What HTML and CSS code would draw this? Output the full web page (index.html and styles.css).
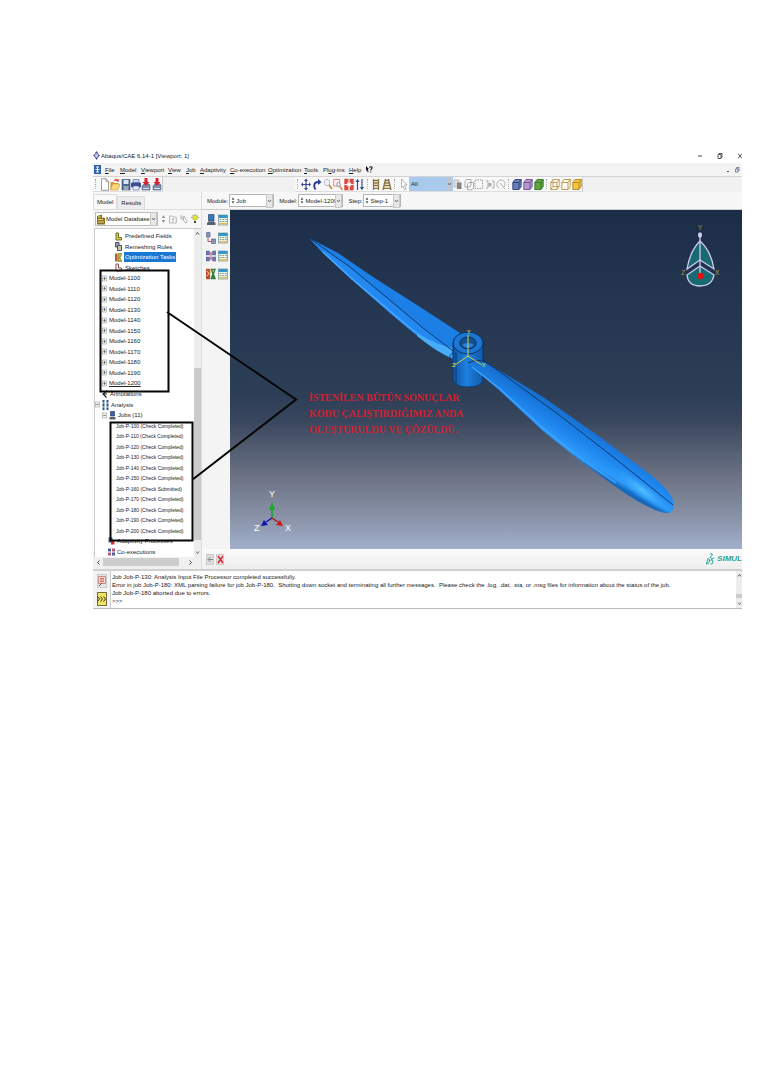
FILE: index.html
```html
<!DOCTYPE html>
<html lang="tr">
<head>
<meta charset="utf-8">
<title>Abaqus/CAE 6.14-1 [Viewport: 1]</title>
<link rel="stylesheet" href="styles.css">
</head>
<body>
<svg class="defs" aria-hidden="true">
  <symbol id="plus" viewBox="0 0 5 7"><rect x=".5" y="1" width="4" height="5" fill="#f4f4f4" stroke="#aaa" stroke-width=".7"/><path d="M1.3 3.5h2.4M2.5 2v3" stroke="#555" stroke-width=".7"/></symbol>
  <symbol id="minus" viewBox="0 0 5 7"><rect x=".5" y="1" width="4" height="5" fill="#f4f4f4" stroke="#aaa" stroke-width=".7"/><path d="M1.3 3.5h2.4" stroke="#555" stroke-width=".7"/></symbol>
  <symbol id="down" viewBox="0 0 5 5"><path d="M1 1.5l1.5 2 1.5-2" fill="none" stroke="#555" stroke-width=".8"/></symbol>
  <symbol id="up" viewBox="0 0 5 5"><path d="M1 3.5l1.5-2 1.5 2" fill="none" stroke="#555" stroke-width="1"/></symbol>
  <symbol id="spin" viewBox="0 0 5 10"><path d="M.8 4l1.7-3 1.7 3zM.8 6l1.7 3 1.7-3z" fill="#555"/></symbol>
  <symbol id="table" viewBox="0 0 10 12"><rect x=".5" y="1" width="9" height="10" fill="#eef3ee" stroke="#6d8d98" stroke-width=".7"/><path d="M.5 1h9v3h-9z" fill="#3596c8"/><path d="M1.5 5.5h2M4.2 5.5h2M7 5.5h1.8M1.5 7.5h2M4.2 7.5h2M7 7.5h1.8" stroke="#8aa883"/><path d="M.8 9.7h8.4" stroke="#d9bb62" stroke-width="1.5"/></symbol>
  <symbol id="cube" viewBox="0 0 10 13"><path d="M.8 4.5L3 1.500h6.200v7L7 11.500H.8zM.8 4.500H7v7M7 4.500l2.200-3" stroke-width=".9" stroke-linejoin="round"/></symbol>
  <symbol id="import" viewBox="0 0 10 13"><path d="M2 7l1-1h5l1 1v5H1V8z" fill="#7e8fae" stroke="#46587b" stroke-width=".6"/><path d="M2 10.500h6" stroke="#dde4ef"/><path d="M3.500 0h3v4h2L5 8 1.500 4h2z" fill="#d3202c"/></symbol>
</svg>
<main class="page">
<section class="app">
  <header class="titlebar">
    <svg width="7" height="9" viewBox="0 0 7 9"><path d="M3.500 0L5 2.200H2zM3.500 9L5 6.800H2zM0 4.500L2 3v3zM7 4.500L5 3v3z" fill="#4a4b8e"/><ellipse cx="3.500" cy="4.500" rx="2" ry="2.400" fill="#c6c7e2" stroke="#4a4b8e" stroke-width=".7"/></svg>
    <h1>Abaqus/CAE 6.14-1 [Viewport: 1]</h1>
    <div class="winbtns">
      <button aria-label="Minimize"><svg width="6" height="8" viewBox="0 0 6 8"><path d="M1 4h4" stroke="#333" stroke-width=".9"/></svg></button>
      <button aria-label="Restore"><svg width="6" height="8" viewBox="0 0 6 8"><path d="M1 2.500h3v4H1zM2 2.500v-1h3v4H4" fill="none" stroke="#333" stroke-width=".8"/></svg></button>
      <button aria-label="Close"><svg width="6" height="8" viewBox="0 0 6 8"><path d="M1 1.500l4 5M5 1.500l-4 5" stroke="#333" stroke-width=".8"/></svg></button>
    </div>
  </header>
  <nav class="menubar">
    <svg width="7" height="9" viewBox="0 0 7 9"><rect width="7" height="9" fill="#2f62a9"/><path d="M2 2h3M3.500 2v5M2 7h3M1.500 4.500h4" stroke="#fff" stroke-width=".9"/></svg>
    <button class="m-file"><u>F</u>ile</button><button class="m-model"><u>M</u>odel</button><button class="m-view"><u>V</u>iewport</button><button class="m-v"><u>V</u>iew</button><button class="m-job"><u>J</u>ob</button><button class="m-ad"><u>A</u>daptivity</button><button class="m-co"><u>C</u>o-execution</button><button class="m-opt"><u>O</u>ptimization</button><button class="m-tools"><u>T</u>ools</button><button class="m-plug">Pl<u>u</u>g-ins</button><button class="m-help"><u>H</u>elp</button>
    <svg width="7" height="8" viewBox="0 0 7 8"><path d="M0 0l3 3-1.200.2L2.600 6 1.600 6.300 1 4 0 5z" fill="#111"/><path d="M3.500 1.600C4 .3 6.300.5 6 2c-.1 1-1.200 1-1.200 2.400M4.800 5.500v1" fill="none" stroke="#111" stroke-width="1.100"/></svg>
    <svg class="mdi" width="14" height="7" viewBox="0 0 14 7"><path d="M1 5.500h2" stroke="#555"/><path d="M9.500 3h2.500v3H9.500zM10.500 3V1.500H13V4.500h-1" fill="none" stroke="#68758b" stroke-width=".9"/></svg>
  </nav>
  <div class="toolbar">
    <div class="group first"><i class="grip"></i>
      <button aria-label="New"><svg viewBox="0 0 10 13"><path d="M1.500 .7h4.500l2.500 3v8.600h-7z" fill="#fff" stroke="#888" stroke-width=".8"/><path d="M6 .7v3h2.500" fill="none" stroke="#888" stroke-width=".7"/></svg></button>
      <button aria-label="Open"><svg viewBox="0 0 10 13"><path d="M.5 4h3l1 1H8v7H.5z" fill="#d89b35"/><path d="M2.500 6H10l-2 6H.6z" fill="#fbd77a" stroke="#c08a30" stroke-width=".5"/><path d="M4 3C5 .5 7 .8 7.500 2.500M8.800 1.500L7.800 4 6.300 2.300z" fill="#d0504a" stroke="#d0504a" stroke-width=".8"/></svg></button>
      <button aria-label="Save"><svg viewBox="0 0 10 13"><rect x="1" y="1.500" width="8" height="10.500" fill="#4a6b96" stroke="#34486c" stroke-width=".6"/><path d="M2.500 2h5v4h-5z" fill="#d8e4ee"/><path d="M2.500 8h5v4h-5z" fill="#9aa9b5"/></svg></button>
      <button aria-label="Print"><svg viewBox="0 0 10 13"><path d="M2 1.500h6V5H2z" fill="#cfd9ee" stroke="#4b5d94" stroke-width=".6"/><rect y="4.500" width="10" height="5" rx="1" fill="#3d4d90"/><path d="M2 8h6v4H2z" fill="#e8ecf6" stroke="#4b5d94" stroke-width=".6"/></svg></button>
      <button aria-label="Import database"><svg><use href="#import"/></svg></button>
      <button aria-label="Import model"><svg><use href="#import"/></svg></button>
    </div>
    <div class="group rest"><i class="grip"></i>
      <button aria-label="Pan"><svg viewBox="0 0 10 13"><path d="M1 6.500h8M5 1.500v10" stroke="#34489e" stroke-width="1.200"/><path d="M5 .5l2 2.500H3zM5 12.500l2-2.500H3zM0 6.500L2 4.300v4.400zM10 6.500L8 4.300v4.400z" fill="#34489e"/></svg></button>
      <button aria-label="Rotate"><svg viewBox="0 0 10 13"><path d="M3.500 11.500C1 8 2 3.800 6.500 4" fill="none" stroke="#2b3a99" stroke-width="1.900"/><path d="M6 1l3.500 3L6 7z" fill="#2b3a99"/></svg></button>
      <button aria-label="Zoom"><svg viewBox="0 0 10 13"><ellipse cx="4" cy="4.500" rx="2.700" ry="3.200" fill="#f2f2f6" stroke="#b6b6bd" stroke-width=".9"/><path d="M6 7l3 4" stroke="#c58948" stroke-width="1.700"/></svg></button>
      <button aria-label="Box zoom"><svg viewBox="0 0 10 13"><path d="M.7 1.500h6v6.500h-6z" fill="#fff5f5" stroke="#d56a68" stroke-width=".8"/><ellipse cx="5.500" cy="6.500" rx="1.800" ry="2.200" fill="#eef" stroke="#999"/><path d="M7 8.500l2.500 3.500" stroke="#c58948" stroke-width="1.400"/></svg></button>
      <button aria-label="Fit view"><svg viewBox="0 0 10 13"><rect x=".3" y=".8" width="9.400" height="11.500" fill="#d94a40"/><path d="M5 1v3M5 9v3M.5 6.500h2.500M7 6.500h2.500" stroke="#fff" stroke-width="1.200"/><path d="M3.200 4.500h3.600v4H3.200z" fill="#fff"/></svg></button>
      <button aria-label="Cycle views"><svg viewBox="0 0 10 13"><path d="M2.500 3v9M7 1v9" stroke="#3c4f9a" stroke-width="1.200"/><path d="M2.500 .8L4.600 4H.4zM7 12.300L9.100 9H4.900z" fill="#3c4f9a"/></svg></button>
      <i class="grip"></i>
      <button aria-label="Parallel view"><svg viewBox="0 0 10 13"><path d="M2.500 1v11M7.500 1v11M2 2.500h6M2 5h6M2 7.500h6M2 10.300h6" stroke="#8a7440" stroke-width="1.300"/></svg></button>
      <button aria-label="Perspective view"><svg viewBox="0 0 10 13"><path d="M3.500 1L1 12M6.500 1L9 12M3.500 2.500h3M3 5h4M2.400 7.500h5.200M2 10.300h6" stroke="#8a7440" stroke-width="1.300"/></svg></button>
      <i class="grip"></i>
      <button aria-label="Select"><svg viewBox="0 0 10 13"><path d="M2.500 1l5.500 6H5.500l1.500 4-1.500.7L4 8l-1.500 1.500z" fill="#fff" stroke="#a3a3a3" stroke-width=".8"/></svg></button>
      <label class="combo pick"><select aria-label="Selection filter"><option>All</option></select><svg class="arr"><use href="#down"/></svg></label>
      <button aria-label="Select inside"><svg viewBox="0 0 10 13"><path d="M1 2h5v7H1z" fill="#ddd" stroke="#bbb"/><path d="M4 4.500h4.500V11H4z" fill="#848484"/></svg></button>
      <button aria-label="Replace selection"><svg viewBox="0 0 10 13"><path d="M1 3.500L2.500 1.500H7V7L5.500 9H1zM3.500 6L5 4.500h4.500V10L8 11.800H3.500z" fill="none" stroke="#999" stroke-width=".8"/></svg></button>
      <button aria-label="Box select"><svg viewBox="0 0 10 13"><path d="M1 2h7.500v8.500H1z" fill="none" stroke="#999" stroke-dasharray="1.500 1"/></svg></button>
      <button aria-label="Pick mode"><svg viewBox="0 0 10 13"><path d="M1 3h2v7H1M7 3h2v7H7" fill="none" stroke="#aaa"/><path d="M3.500 5h3v3.500h-3z" fill="#aaa"/></svg></button>
      <button aria-label="Lasso"><svg viewBox="0 0 10 13"><path d="M3 10C-1 8 1 2 5 2s5 4 3 7M4 5l5 6" fill="none" stroke="#aaa" stroke-width=".9"/></svg></button>
      <i class="grip"></i>
      <button aria-label="Assembly display"><svg class="c1"><use href="#cube"/></svg></button>
      <button aria-label="Part display"><svg class="c2"><use href="#cube"/></svg></button>
      <button aria-label="Mesh display"><svg class="c3"><use href="#cube"/></svg></button>
      <i class="grip"></i>
      <button aria-label="Wireframe"><svg viewBox="0 0 10 13"><path d="M.8 4.500L3 1.500h6.200v7L7 11.500H.8zM.8 4.500H7v7M7 4.500l2.200-3M3 1.500v7h6M3 8.500l-2.200 3" fill="none" stroke="#b6923e" stroke-width=".8"/></svg></button>
      <button aria-label="Hidden"><svg class="c4"><use href="#cube"/></svg></button>
      <button aria-label="Shaded"><svg class="c5"><use href="#cube"/></svg></button>
    </div>
  </div>
  <div class="work">
    <aside class="side">
      <div class="tabs" role="tablist"><button role="tab" class="on" aria-selected="true">Model</button><button role="tab" aria-selected="false">Results</button></div>
      <div class="dbrow">
        <label class="combo db"><svg width="8" height="11" viewBox="0 0 8 11"><path d="M0 2l5-1.500v3L8 4v6.500H0z" fill="#8b7023"/><path d="M1 3h3M1 5.500h5M1 8h6" stroke="#ead37c" stroke-width="1.200"/></svg><select aria-label="Database"><option>Model Database</option></select><svg class="arr"><use href="#down"/></svg></label>
        <svg width="5" height="10" class="dim"><use href="#spin"/></svg>
        <svg width="8" height="10" viewBox="0 0 8 10"><path d="M.5 2h3l.8 1h3v6H.5zM4 8V4.500M2.800 6L4 4.500 5.200 6" fill="none" stroke="#aaa" stroke-width=".8"/></svg>
        <svg width="8" height="10" viewBox="0 0 8 10"><path d="M1 1v4h3M1 3l3 0M4 2l3 5-1 2-3-3z" fill="none" stroke="#aaa" stroke-width=".8"/></svg>
        <svg width="8" height="10" viewBox="0 0 8 10"><path d="M4 1.500c3 0 2.800 3 1.200 4.500H2.800C1.200 4.500 1 1.500 4 1.500z" fill="#e3ec35" stroke="#8c9520" stroke-width=".6"/><path d="M3 7h2v2H3z" fill="#444"/><path d="M0 3.500h1M7 3.500h1M4 0v1M1 .8l.7.700M7 .8l-.7.700" stroke="#555" stroke-width=".6"/></svg>
      </div>
      <div class="treebox">
        <ul class="tree">
          <li class="d2"><svg width="7" height="9" viewBox="0 0 7 9"><path d="M1 1v7h5.500V5.500H3.500V1z" fill="#d4ca49" stroke="#68702b"/></svg><span>Predefined Fields</span></li>
          <li class="d2"><svg width="7" height="9" viewBox="0 0 7 9"><path d="M.5 .5H4V5H.5z" fill="#97a3bb" stroke="#46506a"/><path d="M2.500 3.500h4v5h-4z" fill="#c6c9a1" stroke="#46506a"/></svg><span>Remeshing Rules</span></li>
          <li class="d2"><svg width="7" height="9" viewBox="0 0 7 9"><path d="M0 .5h2.500v8H0z" fill="#c15b33"/><path d="M3 .5h4L5 4.500l2 4H3z" fill="#d0a437" stroke="#4a8b3c" stroke-width=".6"/></svg><span class="sel">Optimization Tasks</span></li>
          <li class="d2"><svg width="7" height="9" viewBox="0 0 7 9"><path d="M1 1v7h5.500V5H3.500V1z" fill="#fff" stroke="#8b4b46"/></svg><span>Sketches</span></li>
          <li class="d1"><svg width="5" height="7"><use href="#plus"/></svg><span>Model-1100</span></li>
          <li class="d1"><svg width="5" height="7"><use href="#plus"/></svg><span>Model-1110</span></li>
          <li class="d1"><svg width="5" height="7"><use href="#plus"/></svg><span>Model-1120</span></li>
          <li class="d1"><svg width="5" height="7"><use href="#plus"/></svg><span>Model-1130</span></li>
          <li class="d1"><svg width="5" height="7"><use href="#plus"/></svg><span>Model-1140</span></li>
          <li class="d1"><svg width="5" height="7"><use href="#plus"/></svg><span>Model-1150</span></li>
          <li class="d1"><svg width="5" height="7"><use href="#plus"/></svg><span>Model-1160</span></li>
          <li class="d1"><svg width="5" height="7"><use href="#plus"/></svg><span>Model-1170</span></li>
          <li class="d1"><svg width="5" height="7"><use href="#plus"/></svg><span>Model-1180</span></li>
          <li class="d1"><svg width="5" height="7"><use href="#plus"/></svg><span>Model-1190</span></li>
          <li class="d1"><svg width="5" height="7"><use href="#plus"/></svg><span><u>Model-1200</u></span></li>
          <li class="d1"><svg width="6" height="8" viewBox="0 0 6 8"><path d="M5 .5L1 4l3.500 3.500M1 4h4" fill="none" stroke="#222" stroke-width="1.100"/></svg><span>Annotations</span></li>
          <li class="d0"><svg width="5" height="7"><use href="#minus"/></svg><svg width="7" height="10" viewBox="0 0 7 10"><path d="M1.500 0v10M5.500 0v10" stroke="#2d5687" stroke-width="2"/><path d="M0 3h7M0 7h7" stroke="#fff" stroke-width=".8"/></svg><span>Analysis</span></li>
          <li class="d1"><svg width="5" height="7"><use href="#minus"/></svg><svg width="7" height="9" viewBox="0 0 7 9"><path d="M1.500 .5h4V5h-4z" fill="#3b5faa" stroke="#2a3d70" stroke-width=".7"/><path d="M.5 6h6v2.500h-6z" fill="#5a6472"/></svg><span>Jobs (11)</span></li>
          <li class="d3"><span>Job-P-100 (Check Completed)</span></li>
          <li class="d3"><span>Job-P-110 (Check Completed)</span></li>
          <li class="d3"><span>Job-P-120 (Check Completed)</span></li>
          <li class="d3"><span>Job-P-130 (Check Completed)</span></li>
          <li class="d3"><span>Job-P-140 (Check Completed)</span></li>
          <li class="d3"><span>Job-P-150 (Check Completed)</span></li>
          <li class="d3"><span>Job-P-160 (Check Submitted)</span></li>
          <li class="d3"><span>Job-P-170 (Check Completed)</span></li>
          <li class="d3"><span>Job-P-180 (Check Completed)</span></li>
          <li class="d3"><span>Job-P-190 (Check Completed)</span></li>
          <li class="d3"><span>Job-P-200 (Check Completed)</span></li>
          <li class="d4"><svg width="7" height="8" viewBox="0 0 7 8"><path d="M.5 .5h4v5h-4z" fill="#4d5d94"/><path d="M3 3h3.500v4.500H3z" fill="#c33"/></svg><span>Adaptivity Processes</span></li>
          <li class="d4"><svg width="7" height="8" viewBox="0 0 7 8"><path d="M0 .5h3v3H0zM4 4.500h3v3H4z" fill="#4e5c94"/><path d="M4 .5h3v3H4zM0 4.500h3v3H0z" fill="#b0587a"/></svg><span>Co-executions</span></li>
        </ul>
        <div class="vbar"><svg width="5" height="5"><use href="#up"/></svg><i class="space"></i><i class="thumb"></i><svg width="5" height="5"><use href="#down"/></svg></div>
      </div>
      <div class="hbar"><svg width="5" height="7" viewBox="0 0 5 7"><path d="M3.500 1.500l-2 2 2 2" fill="none" stroke="#444"/></svg><i class="thumb"></i><svg width="5" height="7" viewBox="0 0 5 7"><path d="M1.500 1.500l2 2-2 2" fill="none" stroke="#444"/></svg></div>
    </aside>
    <div class="right">
      <div class="context">
        <label class="combo"><b>Module:</b><span class="box w1"><svg width="4" height="9"><use href="#spin"/></svg><select><option>Job</option></select><svg class="arr"><use href="#down"/></svg></span></label>
        <label class="combo"><b>Model:</b><span class="box w1"><svg width="4" height="9"><use href="#spin"/></svg><select><option>Model-1200</option></select><svg class="arr"><use href="#down"/></svg></span></label>
        <label class="combo"><b>Step:</b><span class="box w2"><svg width="4" height="9"><use href="#spin"/></svg><select><option>Step-1</option></select><svg class="arr"><use href="#down"/></svg></span></label>
      </div>
      <div class="canvasrow">
        <div class="toolbox">
          <button aria-label="Create job"><svg viewBox="0 0 10 12"><path d="M2.500 .5H8V7H2.500z" fill="#3a79b8" stroke="#28466e" stroke-width=".7"/><path d="M1 9l1.500-1.500H8L9.500 9v2H1z" fill="#566170"/></svg></button>
          <button aria-label="Job manager"><svg><use href="#table"/></svg></button>
          <button aria-label="Create adaptivity"><svg viewBox="0 0 10 12"><path d="M.5 .5H4v4.500H.5zM5.500 7H9.500v4.500h-4z" fill="#8497bd" stroke="#4a5a86" stroke-width=".6"/><path d="M2 5.500v4h3" fill="none" stroke="#c2485a"/></svg></button>
          <button aria-label="Adaptivity manager"><svg><use href="#table"/></svg></button>
          <button aria-label="Create co-execution"><svg viewBox="0 0 10 12"><path d="M0 1h3.500v4H0zM0 7h3.500v4H0zM6.500 1H10v4H6.500zM6.500 7H10v4H6.500z" fill="#6f7cb0" stroke="#4c5a98" stroke-width=".5"/><path d="M3.500 3h3M3.500 9h3M5 3v6" stroke="#c64863"/></svg></button>
          <button aria-label="Co-execution manager"><svg><use href="#table"/></svg></button>
          <button aria-label="Create optimization"><svg viewBox="0 0 10 12"><path d="M0 .8h4.200v10.400H0z" fill="#b4522e"/><path d="M1 3l2 2.500L1 8" fill="none" stroke="#f2c04a" stroke-width="1.200"/><path d="M4.500 .8H10L8 6l2 5.200H4.500L6.200 6z" fill="#2f7c38"/><path d="M6 2h2.500L7.300 4z" fill="#e8cf3e"/></svg></button>
          <button aria-label="Optimization manager"><svg><use href="#table"/></svg></button>
        </div>
        <svg class="viewport" viewBox="230 210 512 339" role="img" aria-label="Propeller model">
          <defs>
            <linearGradient id="sky" x2="0" y2="1"><stop offset="0" stop-color="#1c2d49"/><stop offset=".55" stop-color="#2d3f57"/><stop offset=".62" stop-color="#38465d"/><stop offset=".78" stop-color="#6a7183"/><stop offset=".9" stop-color="#8790a5"/><stop offset="1" stop-color="#a1b0cc"/></linearGradient>
            <linearGradient id="hub"><stop offset="0" stop-color="#1256a4"/><stop offset=".45" stop-color="#1d7fe0"/><stop offset="1" stop-color="#1259a8"/></linearGradient>
            <linearGradient id="blade" gradientUnits="userSpaceOnUse" x1="596" y1="432" x2="578" y2="462"><stop offset="0" stop-color="#1670d2"/><stop offset=".45" stop-color="#1e86ee"/><stop offset=".85" stop-color="#2d9bfb"/><stop offset="1" stop-color="#1568bd"/></linearGradient>
            <radialGradient id="shine"><stop offset="0" stop-color="#54c3ff"/><stop offset="1" stop-color="#2d9bfb" stop-opacity="0"/></radialGradient>
          </defs>
          <path fill="url(#sky)" d="M230 210h512v339H230z"/>
          <path d="M309 238L338 253 373 277 417 305 460 333 454 359 449 357Q428 346 390 313L350 278 323 253z" fill="#1b7fe6"/>
          <path d="M309 238L323 253 350 278 390 313Q428 346 449 357L453 359V350L423 328 391 302 350 268z" fill="#2388ef"/>
          <path d="M323 252L350 277 390 311Q427 343 449 356" fill="none" stroke="#48a9ff" stroke-width="1.500"/>
          <path d="M417 333Q437 345 452 348V358Q438 353 417 336z" fill="#48adf8"/>
          <path d="M309 238L350 267 391 301 423 328 453 351" fill="none" stroke="#0b315f" stroke-width=".9"/>
          <path d="M453 343V380Q454 387 468 387T483 380V343z" fill="url(#hub)" stroke="#0a315f" stroke-width=".8"/>
          <path d="M456 352V384M453 353Q449 354 450 361" fill="none" stroke="#0a315f" stroke-width=".8"/>
          <ellipse cx="468" cy="343" rx="15" ry="11" fill="#1b75d2" stroke="#0a315f"/>
          <ellipse cx="468" cy="343" rx="8" ry="6" fill="#15508f" stroke="#0a2c55"/>
          <path d="M462 345Q468 341 474 345 468 351 462 345z" fill="#2984df"/>
          <path d="M468 363Q478 358 487 363L500 371 543 397 600 437 647 472Q674 493 674 505 674 514 666 513 650 511 616 487L583 463 543 431 500 391z" fill="url(#blade)"/>
          <ellipse cx="642" cy="490" rx="37" ry="8" fill="url(#shine)" transform="rotate(37 642 490)"/>
          <path d="M472 367L500 389 543 428 583 460 616 483" fill="none" stroke="#3fa5fc" stroke-width="1.500"/>
          <path d="M468 363Q478 358 487 363L500 372Q560 414 617 460L673 505" fill="none" stroke="#0a315f" stroke-width=".9"/>
          <path d="M468 335V356L455 365M468 356L482 365" fill="none" stroke="#dfe23a" stroke-width=".9"/>
          <g class="tri"><text x="467" y="334">Y</text><text x="452" y="367">Z</text><text x="482" y="367">X</text></g>
          <g stroke="#d1c9f3" stroke-width="1.300" fill="#176a70"><path d="M700 241Q690 251 687 269L700 260 714 269Q711 251 700 241z"/><path d="M687 275L700 266 714 275Q712 286 700 286T687 275z"/><path d="M700 235V274"/></g>
          <ellipse cx="700" cy="235" rx="2" ry="2.700" fill="#d6cff5"/><ellipse cx="700.500" cy="276" rx="2.800" ry="3.200" fill="#e40d12"/>
          <g class="compass"><text x="698" y="230">Y</text><text x="681" y="275">Z</text><text x="715" y="275">X</text></g>
          <path d="M272 518V508" stroke="#12a51e" stroke-width="1.500"/><path d="M272 502l3 8h-6z" fill="#15ac20"/>
          <path d="M272 518l-6 4" stroke="#1515a5" stroke-width="1.500"/><path d="M261 526l3-6 4 5z" fill="#1212ae"/>
          <path d="M272 518l6 4" stroke="#b01515" stroke-width="1.500"/><path d="M283 526l-7-1 4-5z" fill="#d31414"/>
          <g class="axes"><text x="269" y="497">Y</text><text x="254" y="531">Z</text><text x="285" y="531">X</text></g>
        </svg>
      </div>
      <div class="prompt">
        <button aria-label="Back"><svg width="7" height="9" viewBox="0 0 7 9"><path d="M6.500 4.500h-5M3.500 2L1 4.500 3.500 7" fill="none" stroke="#888"/></svg></button>
        <button aria-label="Cancel"><svg width="7" height="9" viewBox="0 0 7 9"><path d="M1 1l5 7M6 1L1 8" stroke="#e11d27" stroke-width="1.300"/></svg></button>
        <div class="brand"><svg width="9" height="13" viewBox="0 0 9 13"><path d="M4 1Q7 0 6 2.500L4 4.500M4 4.500Q7 5 4.500 8M1 6Q4 5 3.500 8 3 11 .5 11L1.500 7M8.500 5Q5 5 6.500 8 8 11 4.500 11" fill="none" stroke="#26a296" stroke-width="1"/></svg><span>SIMUL</span></div>
      </div>
    </div>
  </div>
  <footer class="messages">
    <div class="mbtns">
      <button aria-label="Message area"><svg width="8" height="11" viewBox="0 0 8 11"><path d="M.5 .5h7v7h-7z" fill="#f4d6cd" stroke="#b86c62" stroke-width=".7"/><path d="M2 2.500h4M2 4h4M2 5.500h4" stroke="#c0504d" stroke-width=".7"/><path d="M1 10l3-3" stroke="#555"/></svg></button>
      <button class="cli" aria-label="Command line"><svg width="9" height="8" viewBox="0 0 9 8"><path d="M.5 1.500L2.500 4 .5 6.500M3.500 1.500L5.500 4l-2 2.500M6.500 1.500L8.500 4l-2 2.500" fill="none" stroke="#222" stroke-width=".9"/></svg></button>
    </div>
    <div class="log">
      <p>Job Job-P-130: Analysis Input File Processor completed successfully.</p>
      <p>Error in job Job-P-180: XML parsing failure for job Job-P-180.&nbsp; Shutting down socket and terminating all further messages.&nbsp; Please check the .log, .dat, .sta, or .msg files for information about the status of the job.</p>
      <p>Job Job-P-180 aborted due to errors.</p>
      <p>&gt;&gt;&gt;</p>
    </div>
    <div class="vbar"><svg width="5" height="5"><use href="#up"/></svg><i class="space"></i><i class="thumb"></i><svg width="5" height="5"><use href="#down"/></svg></div>
  </footer>
  <svg class="marks" viewBox="93 148 240 420" width="240" height="420" aria-hidden="true"><path d="M100.500 270.500h68v121h-68zM110.500 422.500h82v118h-82zM167 312L296 399.500 192 480" fill="none" stroke="#050505" stroke-width="2"/></svg>
  <p class="note">İSTENİLEN BÜTÜN SONUÇLAR<br>KODU ÇALIŞTIRDIĞIMIZ ANDA<br>OLUŞTURULDU VE ÇÖZÜLDÜ.</p>
</section>
</main>
</body>
</html>
```
FILE: styles.css
```css
* { box-sizing: border-box; }
body { margin: 0; background: #fff; color: #222; font: 6px/10px "Liberation Sans", sans-serif; }
.defs { position: absolute; width: 0; height: 0; }
.page { padding: 148px 19px 0 93px; }
.app { position: relative; overflow: hidden; }
button { padding: 0; border: 0; background: none; font: inherit; color: inherit; display: flex; align-items: center; white-space: nowrap; }
button u { text-underline-offset: 1px; }
select { appearance: none; border: 0; padding: 0; margin: 0; background: none; font: inherit; color: inherit; flex: 1; min-width: 0; height: 12px; }
svg { flex: none; display: block; }
h1, p, ul { margin: 0; padding: 0; }

.titlebar { display: flex; align-items: center; height: 15px; gap: 1px; }
h1 { font-size: 6px; font-weight: normal; white-space: nowrap; }
.winbtns { margin-left: auto; margin-right: -1px; display: flex; gap: 14px; }

.menubar { display: flex; align-items: center; height: 13px; padding-left: 1px; background: #f3f3f3; }
.menubar button { display: block; flex: none; text-align: left; }
.m-file { width: 15px; margin-left: 4px; }
.m-model { width: 21px; }
.m-view { width: 27px; }
.m-v { width: 18px; }
.m-job { width: 14px; }
.m-ad { width: 30px; }
.m-co { width: 38px; }
.m-opt { width: 36px; }
.m-tools { width: 19px; }
.m-plug { width: 26px; }
.m-help { width: 17px; }
.mdi { margin-left: auto; margin-right: 2px; }

.toolbar { display: flex; height: 16px; background: #f1f1f1; border-top: 1px solid #d4d4d4; }
.group { display: flex; align-items: center; background: #f8f8f8; border-right: 1px solid #ccc; border-bottom: 1px solid #ddd; }
.group button { width: 11px; justify-content: center; }
.group button svg { width: 10px; height: 13px; }
.grip { width: 3px; height: 10px; margin: 0 2px; border-left: 1px dotted #aaa; flex: none; }
.first { width: 70px; }
.rest { margin-left: 132px; width: 288px; justify-content: space-between; }
.rest .grip { margin: 0 1px 0 2px; }
.combo { display: flex; align-items: center; }
.combo b { font-weight: normal; }
.arr { width: 5px; height: 12px; background: #e7e7e7; outline: 1px solid #c9c9c9; }
.pick { width: 45px; height: 14px; padding: 0 1px 0 2px; background: #a9caec; }
.pick .arr { background: #bfc7cf; outline: 0; }
.c1 { fill: #687eb6; stroke: #2f427f; }
.c2 { fill: #b499cc; stroke: #704c92; }
.c3 { fill: #66a342; stroke: #2b7a2a; }
.c4 { fill: #fffaf0; stroke: #b6923e; }
.c5 { fill: #f4c640; stroke: #ad851f; }

.work { display: grid; grid-template-columns: 109px minmax(0, 1fr); background: #f4f4f4; }
.side { display: flex; flex-direction: column; min-height: 0; border-right: 1px solid #ddd; background: #f7f7f7; }
.tabs { display: flex; align-items: flex-end; height: 17px; }
.tabs button { height: 13px; padding: 0 3px; background: #ececec; border: 1px solid #ddd; border-bottom: 0; }
.tabs .on { height: 15px; background: #fafafa; }
.dbrow { display: flex; align-items: center; gap: 3px; height: 19px; padding: 0 2px; border-top: 1px solid #ddd; }
.db { width: 65px; height: 14px; border: 1px solid #bbb; background: #fff; padding: 0 1px; gap: 1px; }
.dim { opacity: .6; }
.treebox { flex: 1; display: flex; background: #fff; border: 1px solid #ccc; border-bottom: 0; border-right: 0; min-height: 0; margin-left: 1px; }
.tree { flex: 1; display: flex; flex-direction: column; list-style: none; padding-top: 2px; min-width: 0; }
.tree li { flex: 1 1 0; min-height: 0; display: flex; align-items: center; gap: 2px; white-space: nowrap; line-height: 10px; }
.d0 { padding-left: 0; }
.d1 { padding-left: 7px; }
.d2 { padding-left: 20px; }
.d4 { padding-left: 13px; }
.d2 span { padding: 0 1px; }
.tree .sel { background: #1878d3; color: #fff; }
.tree .d3 { font-size: 5px; padding-left: 21px; }
.vbar { width: 7px; display: flex; flex-direction: column; align-items: center; justify-content: space-between; background: #ededed; padding: 2px 0; }
.vbar .space { flex: 132; }
.vbar .thumb { flex: 173; width: 100%; background: #cbcbcb; margin-bottom: 10px; }
.hbar { height: 12px; display: flex; align-items: center; padding: 0 8px 2px 3px; background: #f0f0f0; }
.hbar .thumb { width: 76px; height: 8px; background: #cdcdcd; margin: 0 auto 0 2px; }

.right { display: flex; flex-direction: column; }
.context { display: flex; align-items: center; height: 18px; gap: 5px; padding-left: 5px; border-bottom: 1px solid #ccc; background: #f7f7f7; }
.context .combo { gap: 1px; }
.box { display: flex; align-items: center; height: 13px; padding: 0 1px; gap: 1px; border: 1px solid #b5b5b5; background: #fff; }
.w1 { width: 45px; }
.w2 { width: 38px; }
.canvasrow { display: flex; align-items: flex-start; }
.toolbox { display: grid; grid-template-columns: 10px 10px; gap: 6px 2px; padding: 4px 2px 0 4px; width: 28px; flex: none; }
.toolbox button svg { width: 10px; height: 12px; }
.viewport { flex: 1; min-width: 0; height: auto; }
.tri { font: 6px "Liberation Mono", monospace; fill: #dfe23a; }
.compass { font: 7px "Liberation Mono", monospace; fill: #9c9c3e; }
.axes { font: 9px "Liberation Sans", sans-serif; fill: #fff; }
.prompt { display: flex; align-items: center; height: 20px; gap: 2px; padding-left: 4px; background: linear-gradient(#fbfbfb, #eeeeee); }
.prompt button { width: 8px; height: 11px; background: #ddd; outline: 1px solid #ccc; outline-offset: -1px; justify-content: center; }
.brand { margin-left: auto; display: flex; align-items: center; gap: 2px; color: #26a296; font: italic bold 8px/12px "Liberation Sans", sans-serif; }
.messages { display: flex; border-top: 2px solid #d0d0d0; border-bottom: 1px solid #bbb; background: #f3f3f3; }
.mbtns { width: 17px; display: flex; flex-direction: column; align-items: center; gap: 4px; padding-top: 3px; flex: none; }
.mbtns button { width: 10px; height: 14px; justify-content: center; background: #e8e4e0; border: 1px solid #ccc; }
.mbtns .cli { background: #f2e263; border-color: #77713b; }
.log { flex: 1; min-width: 0; overflow: hidden; background: #fff; border-left: 1px solid #ccc; white-space: nowrap; line-height: 8px; padding: 2px 0 3px 1px; }
.messages .vbar { width: 6px; }
.messages .vbar .space { flex: 4; }
.messages .vbar .thumb { flex: 1; margin-bottom: 3px; }

.marks { position: absolute; left: 0; top: 0; pointer-events: none; }
.note { position: absolute; left: 216px; top: 242px; color: #cf2031; font: bold 10px/16px "Liberation Serif", serif; white-space: nowrap; }
```
